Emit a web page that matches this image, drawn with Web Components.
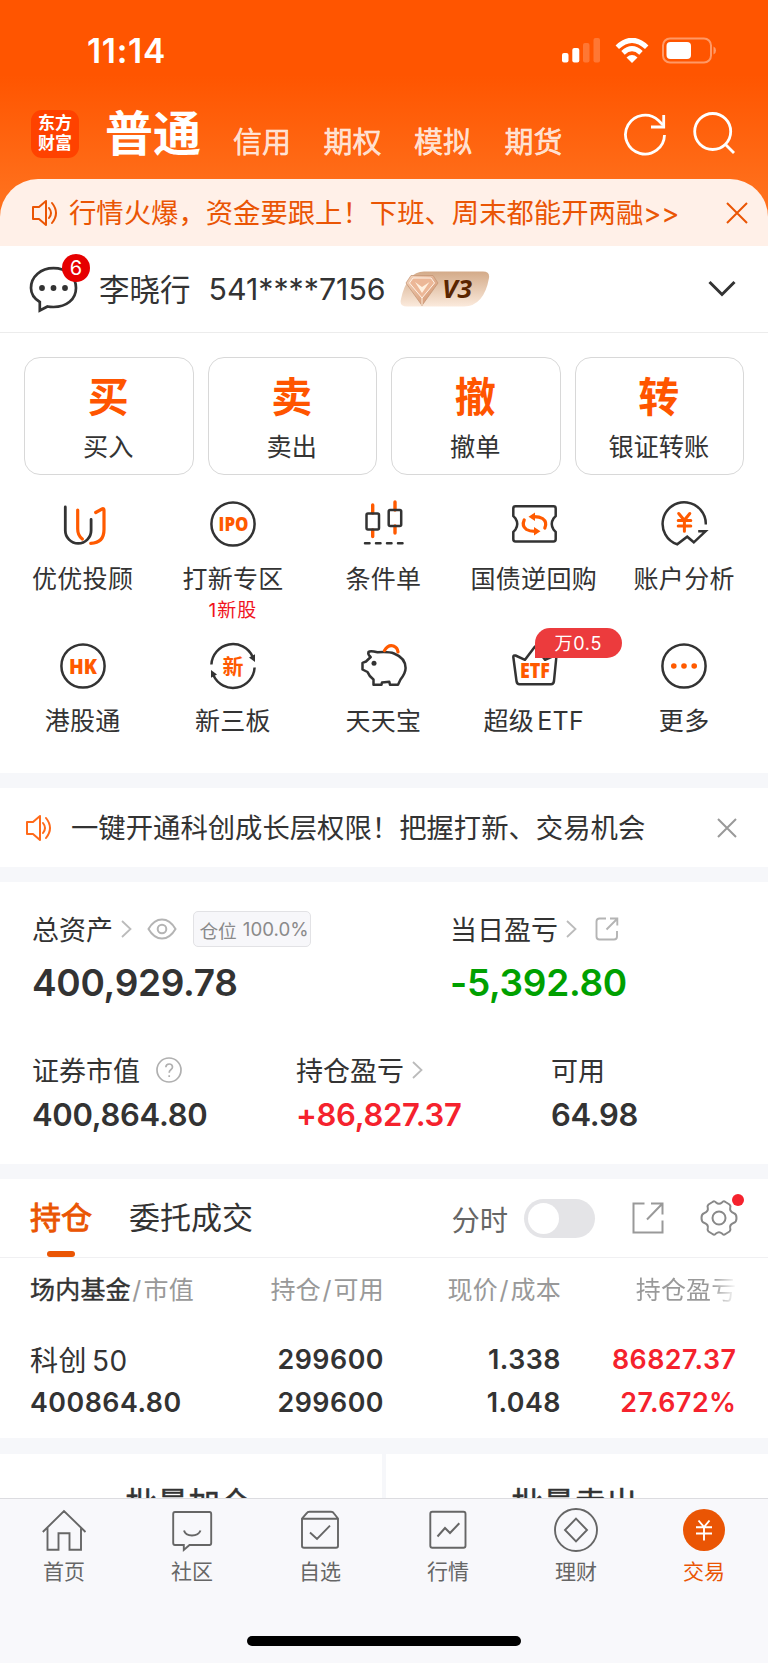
<!DOCTYPE html>
<html lang="zh-CN">
<head>
<meta charset="utf-8">
<title>交易</title>
<style>
  body {
    margin: 0;
    width: 768px;
    height: 1663px;
    overflow: hidden;
    background: #fff;
    color: #333;
    font-family: Inter, "Noto Sans CJK SC", sans-serif;
  }
</style>
</head>
<body>
<trade-app></trade-app>

<script>
// name: [width, height, markup]
const ICONS = {
  signal: [40, 26, `<g fill="#fff"><rect y="15" width="6.500" height="9.500" rx="2"/><rect x="10.300" y="10" width="7" height="14.500" rx="2"/><g opacity=".2"><rect x="21" y="5" width="6.500" height="19.500" rx="2"/><rect x="31.500" width="6.500" height="24.500" rx="2"/></g></g>`],
  wifi: [34, 26, `<g fill="none" stroke="#fff" stroke-width="5"><path d="M2.300 9.200Q17-4.600 31.700 9.200"/><path d="M8 14.800Q17 6.400 26 14.800"/></g><path d="M11.500 19.400Q17 14.800 22.500 19.400L17 25z" fill="#fff"/>`],
  battery: [56, 28, `<rect x="1" y="1.500" width="48" height="24" rx="7" fill="none" stroke="#fff" stroke-opacity=".4" stroke-width="2"/><rect x="4.500" y="5" width="24.500" height="17" rx="4" fill="#fff"/><path d="M51.500 9.500q2.500 1 2.500 4t-2.500 4z" fill="#fff" opacity=".4"/>`],
  refresh: [46, 46, `<g fill="none" stroke="#fff" stroke-width="2.800"><path d="M42.500 24A19.500 19.500 0 1 1 36.500 9.500L41 14"/><path d="M41.700 4V16H29"/></g>`],
  search: [46, 46, `<g fill="none" stroke="#fff" stroke-width="2.800"><circle cx="20.700" cy="20.500" r="18"/><path d="M33 33L42 42"/></g>`],
  speaker: [28, 28, `<g fill="none" stroke="currentColor" stroke-width="2" stroke-linejoin="round"><path d="M2 8H8L15 2V26L8 20H2z"/><path d="M18 9Q22 14 18 19M21 4Q29 14 21 24" stroke-linecap="round"/></g>`],
  close: [24, 24, `<path d="M2 2L22 22M22 2L2 22" fill="none" stroke="currentColor" stroke-width="2"/>`],
  closeSmall: [20, 20, `<path d="M1 1L19 19M19 1L1 19" fill="none" stroke="currentColor" stroke-width="2"/>`],
  chat: [50, 50, `<path d="M10.800 46.500V38C5 34.500 2 29.500 2 24C2 12.500 12 4.200 24.500 4.200S47 12.500 47 24S37.500 43 24.500 43Q21 43 18.500 42.500z" fill="none" stroke="#333" stroke-width="2.700"/><g fill="#333"><circle cx="13" cy="24" r="2.900"/><circle cx="24.500" cy="24" r="2.900"/><circle cx="36" cy="24" r="2.900"/></g>`],
  vip: [90, 36, `<defs><linearGradient id="v" x2="0" y2="1"><stop stop-color="#d3aa88"/><stop offset="1" stop-color="#fbeadc"/></linearGradient><linearGradient id="g" x2="1" y2="1"><stop stop-color="#f4d5bd"/><stop offset="1" stop-color="#cf8e68"/></linearGradient></defs><path d="M24 .500H83Q90 .500 89 7Q84 35 64 35.500H7Q-1 35.500 1 28Q7 .500 24 .500z" fill="url(#v)"/><path d="M11 4.500H33L38 12L22 34.500L6 12z" fill="url(#g)" stroke="#c29070" stroke-width=".7"/><path d="M13 7H31L34.500 12L22 27L9.500 12z" fill="#ecb797" stroke="#fff3e8" stroke-width="1"/><path d="M15 11L22 22L29.500 11L22 16z" fill="#fff0df"/><path d="M22 27V34" stroke="#fff0df"/><text x="42" y="26.500" font-family="Open Sans, sans-serif" font-weight="700" font-style="italic" font-size="25.500" fill="#5a2500" textLength="30" lengthAdjust="spacingAndGlyphs">V3</text>`],
  down: [28, 18, `<path d="M1.500 2L14 14.500L26.500 2" fill="none" stroke="#333" stroke-width="3"/>`],
  right: [11, 18, `<path d="M1 1L9.500 9L1 17" fill="none" stroke="#bbb" stroke-width="1.800"/>`],
  eye: [30, 22, `<g fill="none" stroke="#b4b4b4" stroke-width="2"><path d="M1.500 11Q7 1.500 15 1.500T28.500 11Q23 20.500 15 20.500T1.500 11z"/><circle cx="15" cy="11" r="4.300"/></g>`],
  help: [26, 26, `<circle cx="13" cy="13" r="12" fill="none" stroke="#b0b0b0" stroke-width="1.700"/><path d="M9.800 10.300Q10 7 13.200 7T16.500 10Q16.500 11.500 14.800 12.700T13.200 15.800M13.200 18.200V20" fill="none" stroke="#b0b0b0" stroke-width="1.700"/>`],
  share: [24, 24, `<g fill="none" stroke="#b4b4b4" stroke-width="1.900"><path d="M11 1.500H4.500Q1.500 1.500 1.500 4.500V19.500Q1.500 22.500 4.500 22.500H19Q22 22.500 22 19.500V14"/><path d="M15 1.500H22.300V8.500M22 2L11.500 12.500"/></g>`],
  shareBig: [32, 32, `<g fill="none" stroke="#999" stroke-width="2"><path d="M12.500 1.500H1.500V30.500H30.500V18.500"/><path d="M19 1.500H30.500V12.500M30 2L15 17.500"/></g>`],
  gear: [38, 38, `<g fill="none" stroke="#888" stroke-width="2" stroke-linejoin="round"><path d="M12.500 3Q14.500 1.500 16 3.500Q19 6 22 3.500Q23.500 1.500 25.500 3L29.500 5.500Q31 7 30.200 9Q29.500 12.500 34 14.200Q36.500 15 36.500 19T34 23.800Q29.500 25.500 30.200 29Q31 31 29.500 32.500L25.500 35Q23.500 36.500 22 34.500Q19 32 16 34.500Q14.500 36.500 12.500 35L8.500 32.500Q7 31 7.800 29Q8.500 25.500 4 23.800Q1.500 23 1.500 19T4 14.200Q8.500 12.500 7.800 9Q7 7 8.500 5.500z"/><circle cx="19" cy="19" r="6.500"/></g>`],

  uu: [52, 52, `<g fill="none" stroke-width="2.800" stroke-linecap="round"><path d="M8.300 9V32.500a12.900 12.900 0 0 0 25.800 0V21.500" stroke="#333"/><path d="M20.700 12V31Q20.700 37.500 25.300 41M38.700 14.500L45 11Q47 10 47 12.500V31.500Q47 45 33.700 45.300" stroke="#ff5a00" stroke-width="3.200"/></g>`],
  ipo: [52, 52, `<circle cx="26" cy="26" r="21.600" fill="none" stroke="#333" stroke-width="2.500"/><text x="11.500" y="33" font-family="Open Sans, sans-serif" font-weight="800" font-size="20" fill="#ff5a00" textLength="30" lengthAdjust="spacingAndGlyphs">IPO</text>`],
  candles: [52, 52, `<path d="M15.700 7V15M15.700 32V38.500M38 4V12M38 28V35" stroke="#ff5a00" stroke-width="3.400" stroke-linecap="round"/><g fill="none" stroke="#333" stroke-width="2.500"><rect x="9.500" y="15.500" width="12.500" height="16" rx="1.500"/><rect x="31.700" y="12" width="12.500" height="16" rx="1.500"/><path d="M8 45.300H46.500" stroke-dasharray="4.500 6.500" stroke-linecap="round"/></g>`],
  bond: [52, 52, `<path d="M7.500 8.300H45.500Q47.700 8.300 47.700 10.500V18L45.500 20.500Q42 26 45.500 31.500L47.700 34V41Q47.700 43.500 45.500 43.500H7.500Q5.300 43.500 5.300 41V34L7.500 31.500Q11 26 7.500 20.500L5.300 18V10.500Q5.300 8.300 7.500 8.300z" fill="none" stroke="#333" stroke-width="2.500"/><g id="a"><path d="M36.800 30Q39.500 24 34.500 20.500Q31.500 18.700 26 18.700" fill="none" stroke="#ff5a00" stroke-width="3.200" stroke-linecap="round"/><path d="M20.500 18.700L27 14.500V23z" fill="#ff5a00"/></g><use href="#a" transform="rotate(180 26.500 26)"/>`],
  analysis: [52, 52, `<path d="M47.800 26.500A21.600 21.600 0 1 0 19.200 46.300L29.200 38.700L35.800 44.300L47.500 33.300H40.200" fill="none" stroke="#333" stroke-width="2.500"/><path d="M20.700 15.500L26.300 22.300L31.800 15.500M20.200 22.600H32.800M20.200 28H32.800M26.400 22V33.200" fill="none" stroke="#ff5a00" stroke-width="3" stroke-linecap="round"/>`],
  hk: [52, 52, `<circle cx="26" cy="26" r="21.600" fill="none" stroke="#333" stroke-width="2.500"/><text x="12" y="33.500" font-family="Open Sans, sans-serif" font-weight="800" font-size="20.500" fill="#ff5a00" textLength="28" lengthAdjust="spacingAndGlyphs">HK</text>`],
  xin: [52, 52, `<g id="b"><path d="M4.400 24.500A21.600 21.600 0 0 1 45.500 16.500" fill="none" stroke="#333" stroke-width="2.500"/><path d="M42 17.500L48 14.200V22z" fill="#333"/></g><use href="#b" transform="rotate(180 26 26)"/><text x="15.500" y="33.500" font-family="Noto Sans CJK SC, sans-serif" font-weight="700" font-size="21" fill="#ff5a00">新</text>`],
  pig: [52, 52, `<path d="M11.500 12Q13 10.500 20.500 12.300Q32 11.500 37 13.500Q48.500 18 48.600 28Q48.600 33 43.500 39.500L41 44.800H33L32.300 41.800L25 42.500L24.500 44.800H16.500V39.500Q12 36 10.500 32L5.500 29.500V22.800L9 21.500L13.700 17Q10.500 14.500 11.500 12z" fill="none" stroke="#333" stroke-width="2.500" stroke-linejoin="round"/><circle cx="17" cy="23.300" r="2.500" fill="#333"/><path d="M27.500 10.500Q31 4.500 36.500 6Q40.500 7.500 41 12" fill="none" stroke="#ff5a00" stroke-width="3.200" stroke-linecap="round"/>`],
  etf: [52, 52, `<path d="M7.500 15.500L17 19.800L27 6.500L37 19.800L46.500 15.500Q48.500 15.300 48.300 17.500L46 41Q45.500 44.300 43 44.300H11.500Q9 44.300 8.500 41L5.300 17Q5.300 15 7.500 15.500z" fill="none" stroke="#333" stroke-width="2.500" stroke-linejoin="round"/><text x="12" y="37.500" font-family="Open Sans, sans-serif" font-weight="800" font-size="21" fill="#ff5a00" textLength="30" lengthAdjust="spacingAndGlyphs">ETF</text>`],
  more: [52, 52, `<circle cx="26" cy="26" r="21.600" fill="none" stroke="#333" stroke-width="2.500"/><g fill="#ff5a00"><circle cx="15.800" cy="26" r="2.800"/><circle cx="26" cy="26" r="2.800"/><circle cx="36.200" cy="26" r="2.800"/></g>`],

  home: [48, 48, `<path d="M2.800 26L24 5L45.500 26M7.500 22V43.700H18.500V27.300H29.500V43.700H41V22" fill="none" stroke="#666" stroke-width="1.900"/>`],
  community: [48, 48, `<path d="M7 6H41.500Q43.200 6 43.200 8V37Q43.200 39 41.500 39H21.500L15.800 44V39H7Q5.200 39 5.200 37V8Q5.200 6 7 6z" fill="none" stroke="#666" stroke-width="1.900"/><path d="M16 24.500Q17.500 29.500 24 29.500T32.500 24.500" fill="none" stroke="#666" stroke-width="2"/>`],
  watch: [48, 48, `<path d="M13.500 5.800H35Q37 5.800 38 7.500L42 12.500V40Q42 41.700 40 41.700H8Q6 41.700 6 40V12.500L10.500 7.500Q11.500 5.800 13.500 5.800zM6 12.700H42M14 26.500L21 33L34 19.700" fill="none" stroke="#666" stroke-width="1.900"/>`],
  market: [48, 48, `<rect x="6.300" y="5.800" width="35.200" height="36" rx="2" fill="none" stroke="#666" stroke-width="1.900"/><path d="M13.500 30.500L21 22L26 27L35.300 17.300" fill="none" stroke="#666" stroke-width="2"/>`],
  wealth: [48, 48, `<g fill="none" stroke="#666" stroke-width="1.900"><circle cx="24" cy="24" r="21"/><path d="M24 12.700L35 24L24 35.300L13 24z"/></g>`],
  trade: [48, 48, `<circle cx="24" cy="24" r="21" fill="#ea5504"/><path d="M18.500 14.500L24 21L29.500 14.500M16 21.300H32M16 27.500H32M24 21V34.500" fill="none" stroke="#fff" stroke-width="1.900"/>`]
};

class UiIcon extends HTMLElement {
  connectedCallback() {
    const [w, h, body] = ICONS[this.getAttribute('name')];
    this.attachShadow({ mode: 'open' });
    this.shadowRoot.innerHTML = `
      <style>
        :host { display: inline-flex; flex: none; }
        svg { display: block; }
      </style>
      <svg width="${w}" height="${h}" viewBox="0 0 ${w} ${h}">${body}</svg>
    `;
  }
}
customElements.define('ui-icon', UiIcon);

class StatusBar extends HTMLElement {
  constructor() {
    super();
    this.attachShadow({ mode: 'open' });
    this.shadowRoot.innerHTML = `
      <style>
        :host {
          display: flex;
          align-items: center;
          height: 102px;
          padding: 0 50px 0 87px;
          box-sizing: border-box;
          color: #fff;
        }
        .time {
          flex: 1;
          font-size: 33.500px;
          font-weight: 600;
          letter-spacing: 0.700px;
        }
        .icons { display: flex; align-items: center; gap: 13px; }
      </style>
      <div class="time">11:14</div>
      <div class="icons">
        <ui-icon name="signal"></ui-icon>
        <ui-icon name="wifi"></ui-icon>
        <ui-icon name="battery"></ui-icon>
      </div>
    `;
  }
}
customElements.define('status-bar', StatusBar);

class AccountTabs extends HTMLElement {
  constructor() {
    super();
    this.attachShadow({ mode: 'open' });
    this.shadowRoot.innerHTML = `
      <style>
        :host {
          display: flex;
          align-items: center;
          height: 77px;
          padding: 0 30px 14px 31px;
          box-sizing: border-box;
          color: #fff;
        }
        .logo {
          width: 48px;
          height: 48px;
          border-radius: 11px;
          background: #ff4200;
          font: 700 17px/20px "Liberation Sans", "Noto Sans CJK SC", sans-serif;
          display: grid;
          place-content: center;
          text-align: center;
        }
        .current {
          margin-left: 26px;
          font-size: 48px;
          font-weight: 700;
          line-height: 60px;
        }
        .others {
          display: flex;
          gap: 32.500px;
          margin-left: 32px;
          padding-top: 12px;
          font-size: 29px;
          -webkit-text-stroke: 0.500px;
          color: rgba(255, 255, 255, .8);
        }
        .tools { display: flex; gap: 24px; margin-left: auto; }
      </style>
      <div class="logo"><span>东方</span><span>财富</span></div>
      <div class="current">普通</div>
      <div class="others">
        <span>信用</span><span>期权</span><span>模拟</span><span>期货</span>
      </div>
      <div class="tools">
        <ui-icon name="refresh"></ui-icon>
        <ui-icon name="search"></ui-icon>
      </div>
    `;
  }
}
customElements.define('account-tabs', AccountTabs);

class NoticeBar extends HTMLElement {
  connectedCallback() {
    const hot = this.hasAttribute('hot');
    this.attachShadow({ mode: 'open' });
    this.shadowRoot.innerHTML = `
      <style>
        :host {
          display: flex;
          align-items: center;
          box-sizing: border-box;
          height: 79px;
          padding: 0 31px 0 25px;
          font-size: 27.350px;
          white-space: nowrap;
        }
        .text { margin-top: -3px; }
        .speaker { color: #ff6a1a; margin-right: 18px; }
        .close { margin-left: auto; color: #999; }
        :host([hot]) {
          height: 67px;
          padding: 0 19px 0 31px;
          border-radius: 38px 38px 0 0;
          background: #fff0e8;
          color: #ea5504;
        }
        :host([hot]) .speaker { color: #ea5504; margin-right: 10px; }
        :host([hot]) .close { color: #ea5504; }
      </style>
      <ui-icon class="speaker" name="speaker"></ui-icon>
      <div class="text"><slot></slot></div>
      <ui-icon class="close" name="${hot ? 'close' : 'closeSmall'}"></ui-icon>
    `;
  }
}
customElements.define('notice-bar', NoticeBar);

class UserBar extends HTMLElement {
  constructor() {
    super();
    this.attachShadow({ mode: 'open' });
    this.shadowRoot.innerHTML = `
      <style>
        :host {
          display: flex;
          align-items: center;
          height: 87px;
          padding: 0 32px 0 29px;
          box-sizing: border-box;
          border-bottom: 1.500px solid #ececec;
          font-size: 30.500px;
        }
        .chat { position: relative; display: flex; }
        .count {
          position: absolute;
          left: 33px;
          top: -10px;
          width: 28px;
          height: 28px;
          border-radius: 50%;
          background: #e60000;
          color: #fff;
          font-size: 20px;
          line-height: 28px;
          text-align: center;
        }
        .name { margin: -2px 0 0 20px; }
        .number { margin-left: 18px; font-size: 30.300px; }
        .vip { margin-left: 14px; }
        .down { margin-left: auto; }
      </style>
      <div class="chat"><ui-icon name="chat"></ui-icon><div class="count">6</div></div>
      <div class="name">李晓行</div>
      <div class="number">541****7156</div>
      <ui-icon class="vip" name="vip"></ui-icon>
      <ui-icon class="down" name="down"></ui-icon>
    `;
  }
}
customElements.define('user-bar', UserBar);

class TradeButton extends HTMLElement {
  connectedCallback() {
    this.attachShadow({ mode: 'open' });
    this.shadowRoot.innerHTML = `
      <style>
        :host {
          display: flex;
          flex-direction: column;
          align-items: center;
          box-sizing: border-box;
          height: 118px;
          padding: 14px 1px 0 0;
          border: 1.500px solid #d8d8d8;
          border-radius: 16px;
        }
        .big { font-size: 41px; line-height: 51px; font-weight: 700; color: #ff5500; }
        .label { margin-top: 9px; font-size: 25.200px; line-height: 30px; }
      </style>
      <div class="big">${this.getAttribute('mark')}</div>
      <div class="label"><slot></slot></div>
    `;
  }
}
customElements.define('trade-button', TradeButton);

class MenuItem extends HTMLElement {
  connectedCallback() {
    const tag = this.getAttribute('tag');
    const note = this.getAttribute('note');
    this.attachShadow({ mode: 'open' });
    this.shadowRoot.innerHTML = `
      <style>
        :host {
          display: flex;
          flex-direction: column;
          align-items: center;
          height: 142px;
          white-space: nowrap;
        }
        .icon { position: relative; display: flex; }
        .tag {
          position: absolute;
          left: 27px;
          top: -12px;
          width: 87px;
          height: 30px;
          border-radius: 15px 15px 15px 0;
          background: #ec3b3d;
          color: #fff;
          font-size: 18px;
          line-height: 31px;
          letter-spacing: 0.700px;
          text-align: center;
        }
        .label { margin-top: 13px; font-size: 25px; line-height: 32px; letter-spacing: 0.300px; }
        .note { margin-top: 1px; font-size: 19px; line-height: 30px; letter-spacing: 1px; color: #f0141e; }
      </style>
      <div class="icon">
        <ui-icon name="${this.getAttribute('icon')}"></ui-icon>
        ${tag ? `<div class="tag">${tag}</div>` : ''}
      </div>
      <div class="label"><slot></slot></div>
      ${note ? `<div class="note">${note}</div>` : ''}
    `;
  }
}
customElements.define('menu-item', MenuItem);

class AssetPanel extends HTMLElement {
  constructor() {
    super();
    this.attachShadow({ mode: 'open' });
    this.shadowRoot.innerHTML = `
      <style>
        :host { display: block; height: 282px; padding: 28px 0 0 32px; box-sizing: border-box; }
        .row { display: grid; }
        .total { grid-template-columns: 418px 1fr; height: 141px; }
        .detail { grid-template-columns: 264px 255px 1fr; }
        .label { display: flex; align-items: center; height: 38px; font-size: 27px; }
        .label > span { margin-top: -2px; }
        .label ui-icon { margin-left: 8px; }
        .label .eye { margin-left: 15px; }
        .label .share { margin-left: 18px; }
        .label .help { margin-left: 16px; }
        .position {
          display: flex;
          align-items: center;
          justify-content: center;
          gap: 6px;
          box-sizing: border-box;
          width: 118px;
          height: 36px;
          margin-left: 16px;
          padding-left: 4px;
          border: 1.500px solid #e2e2e5;
          border-radius: 5px;
          background: #f7f7fa;
          color: #8a8a8a;
          font-size: 18.700px;
        }
        .value { font-weight: 600; }
        .total .value { font-size: 37px; line-height: 44px; margin-top: 13px; letter-spacing: -0.300px; }
        .detail .value { font-size: 31px; line-height: 40px; margin-top: 6px; letter-spacing: -0.300px; }
        .down { color: #00a000; }
        .up { color: #f5222d; }
      </style>
      <div class="row total">
        <div>
          <div class="label"><span>总资产</span><ui-icon name="right"></ui-icon><ui-icon class="eye" name="eye"></ui-icon>
            <div class="position"><span>仓位</span><span>100.0%</span></div>
          </div>
          <div class="value">400,929.78</div>
        </div>
        <div>
          <div class="label"><span>当日盈亏</span><ui-icon name="right"></ui-icon><ui-icon class="share" name="share"></ui-icon></div>
          <div class="value down">-5,392.80</div>
        </div>
      </div>
      <div class="row detail">
        <div>
          <div class="label"><span>证券市值</span><ui-icon class="help" name="help"></ui-icon></div>
          <div class="value">400,864.80</div>
        </div>
        <div>
          <div class="label"><span>持仓盈亏</span><ui-icon name="right"></ui-icon></div>
          <div class="value up">+86,827.37</div>
        </div>
        <div>
          <div class="label"><span>可用</span></div>
          <div class="value">64.98</div>
        </div>
      </div>
    `;
  }
}
customElements.define('asset-panel', AssetPanel);

class HoldingTabs extends HTMLElement {
  constructor() {
    super();
    this.attachShadow({ mode: 'open' });
    this.shadowRoot.innerHTML = `
      <style>
        :host {
          display: flex;
          align-items: stretch;
          height: 79px;
          padding: 0 30px;
          box-sizing: border-box;
          border-bottom: 1.500px solid #f0f0f2;
          font-size: 31px;
        }
        .tab { display: flex; flex-direction: column; align-items: center; line-height: 78px; height: 78px; }
        .tab + .tab { margin-left: 37px; }
        .active { color: #ea5504; -webkit-text-stroke: 0.900px; }
        .active::after {
          content: "";
          width: 28px;
          height: 6px;
          margin-top: -6px;
          border-radius: 3px;
          background: #ea5504;
        }
        .tools { display: flex; align-items: center; margin-left: auto; font-size: 28.300px; color: #666; }
        .switch {
          width: 71px;
          height: 39px;
          padding: 4px;
          box-sizing: border-box;
          margin: 0 37px 0 16px;
          border-radius: 20px;
          background: #e4e4e7;
        }
        .switch::before {
          content: "";
          display: block;
          width: 31px;
          height: 31px;
          border-radius: 50%;
          background: #fff;
        }
        .settings { position: relative; display: flex; margin-left: 36px; }
        .dot {
          position: absolute;
          left: 32px;
          top: -5px;
          width: 12px;
          height: 12px;
          border-radius: 50%;
          background: #f5222d;
        }
      </style>
      <div class="tab active">持仓</div>
      <div class="tab">委托成交</div>
      <div class="tools">
        <span>分时</span>
        <div class="switch"></div>
        <ui-icon name="shareBig"></ui-icon>
        <div class="settings"><ui-icon name="gear"></ui-icon><div class="dot"></div></div>
      </div>
    `;
  }
}
customElements.define('holding-tabs', HoldingTabs);

class HoldingTable extends HTMLElement {
  constructor() {
    super();
    this.attachShadow({ mode: 'open' });
    this.shadowRoot.innerHTML = `
      <style>
        :host { display: block; height: 180px; padding: 11px 32px 0 30px; box-sizing: border-box; }
        .row {
          display: grid;
          grid-template-columns: 183px 171px 177px 175.500px;
          height: 42px;
          align-items: center;
          text-align: right;
          white-space: nowrap;
          font-size: 26.800px;
          font-weight: 600;
          letter-spacing: 0.500px;
        }
        .row > :first-child { text-align: left; }
        .head {
          height: 38px;
          margin-bottom: 31px;
          font-size: 25px;
          font-weight: 400;
          letter-spacing: 0.200px;
          color: #999;
        }
        .head b { font-weight: 400; -webkit-text-stroke: 0.400px; color: #333; }
        .head i { font-style: normal; margin: 0 2px 0 1.500px; }
        .fade {
          background: linear-gradient(90deg, #999 75%, #fff);
          background-clip: text;
          -webkit-background-clip: text;
          color: transparent;
          justify-self: end;
        }
        .stock { font-size: 28px; font-weight: 400; }
        .stock span { margin-left: 5px; }
        .last { margin-top: 1px; }
        .up { color: #f5222d; }
      </style>
      <div class="row head">
        <div><b>场内基金</b><i>/</i>市值</div>
        <div>持仓<i>/</i>可用</div>
        <div>现价<i>/</i>成本</div>
        <div class="fade">持仓盈亏</div>
      </div>
      <div class="row">
        <div class="stock">科创<span>50</span></div>
        <div>299600</div>
        <div>1.338</div>
        <div class="up">86827.37</div>
      </div>
      <div class="row last">
        <div>400864.80</div>
        <div>299600</div>
        <div>1.048</div>
        <div class="up">27.672%</div>
      </div>
    `;
  }
}
customElements.define('holding-table', HoldingTable);

class NavItem extends HTMLElement {
  connectedCallback() {
    this.attachShadow({ mode: 'open' });
    this.shadowRoot.innerHTML = `
      <style>
        :host {
          flex: 1;
          display: flex;
          flex-direction: column;
          align-items: center;
          font-size: 21px;
          line-height: 28px;
          color: #666;
        }
        :host([active]) { color: #ea5504; }
        div { margin-top: 4px; }
      </style>
      <ui-icon name="${this.getAttribute('icon')}"></ui-icon>
      <div><slot></slot></div>
    `;
  }
}
customElements.define('nav-item', NavItem);

class TradeApp extends HTMLElement {
  constructor() {
    super();
    this.attachShadow({ mode: 'open' });
    this.shadowRoot.innerHTML = `
      <style>
        :host { display: flex; flex-direction: column; height: 1663px; }
        header { background: linear-gradient(#ff5500 75px, #ff701c 195px); }
        main { flex: 1; min-height: 0; overflow: hidden; }
        .buttons {
          display: grid;
          grid-template-columns: repeat(4, 1fr);
          gap: 14px;
          padding: 24px 24px 0;
        }
        .menu {
          display: grid;
          grid-template-columns: repeat(5, 150.400px);
          padding: 23px 0 0 7.400px;
          height: 275px;
        }
        .band { height: 15px; background: #f6f7fa; }
        .band.last { height: 16px; }
        .batch { display: grid; grid-template-columns: 1fr 1fr; gap: 4px; background: #f6f7fa; }
        .batch div {
          height: 99px;
          line-height: 100px;
          padding-right: 5px;
          background: #fff;
          text-align: center;
          font-size: 31.500px;
          -webkit-text-stroke: 0.500px;
        }
        nav { height: 165px; box-sizing: border-box; border-top: 1.500px solid #dcdce0; background: #f8f8fb; }
        .items { display: flex; padding-top: 7px; }
        .home-bar { width: 274px; height: 10px; margin: 50px auto 0; border-radius: 5px; background: #000; }
      </style>
      <header>
        <status-bar></status-bar>
        <account-tabs></account-tabs>
        <notice-bar hot>行情火爆，资金要跟上！下班、周末都能开两融&gt;&gt;</notice-bar>
      </header>
      <main>
        <user-bar></user-bar>
        <div class="buttons">
          <trade-button mark="买">买入</trade-button>
          <trade-button mark="卖">卖出</trade-button>
          <trade-button mark="撤">撤单</trade-button>
          <trade-button mark="转">银证转账</trade-button>
        </div>
        <div class="menu">
          <menu-item icon="uu">优优投顾</menu-item>
          <menu-item icon="ipo" note="1新股">打新专区</menu-item>
          <menu-item icon="candles">条件单</menu-item>
          <menu-item icon="bond">国债逆回购</menu-item>
          <menu-item icon="analysis">账户分析</menu-item>
          <menu-item icon="hk">港股通</menu-item>
          <menu-item icon="xin">新三板</menu-item>
          <menu-item icon="pig">天天宝</menu-item>
          <menu-item icon="etf" tag="万0.5">超级<span style="margin-left: 3px">ETF</span></menu-item>
          <menu-item icon="more">更多</menu-item>
        </div>
        <div class="band"></div>
        <notice-bar>一键开通科创成长层权限！把握打新、交易机会</notice-bar>
        <div class="band"></div>
        <asset-panel></asset-panel>
        <div class="band"></div>
        <holding-tabs></holding-tabs>
        <holding-table></holding-table>
        <div class="band last"></div>
        <div class="batch">
          <div>批量加仓</div>
          <div>批量卖出</div>
        </div>
      </main>
      <nav>
        <div class="items">
          <nav-item icon="home">首页</nav-item>
          <nav-item icon="community">社区</nav-item>
          <nav-item icon="watch">自选</nav-item>
          <nav-item icon="market">行情</nav-item>
          <nav-item icon="wealth">理财</nav-item>
          <nav-item icon="trade" active>交易</nav-item>
        </div>
        <div class="home-bar"></div>
      </nav>
    `;
  }
}
customElements.define('trade-app', TradeApp);
</script>
</body>
</html>
